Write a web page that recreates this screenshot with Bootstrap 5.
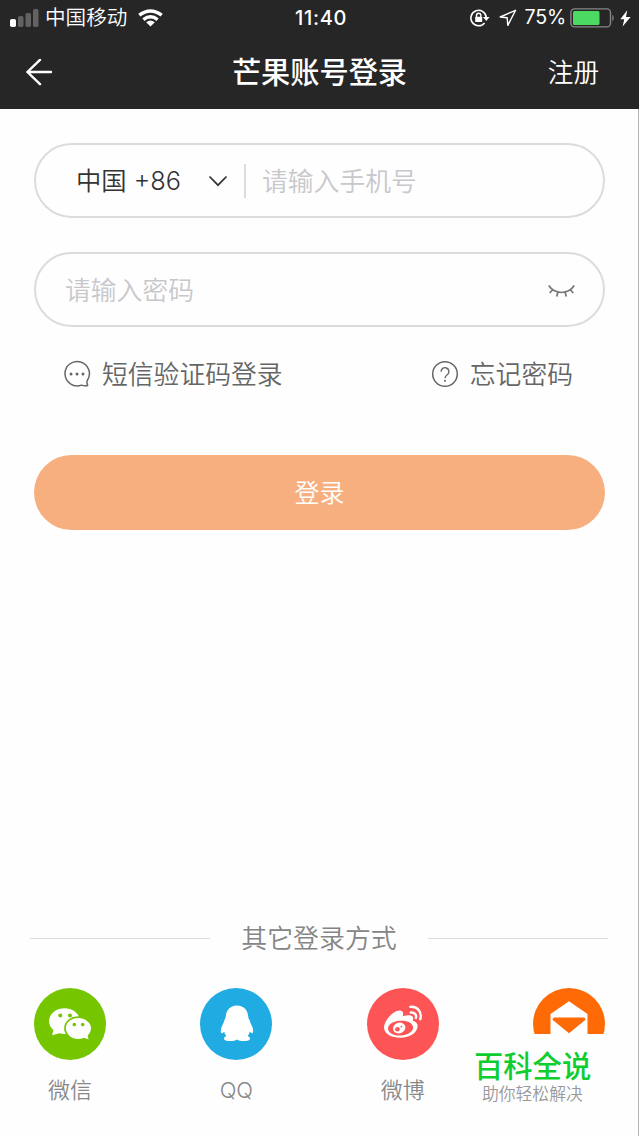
<!DOCTYPE html>
<html lang="zh-CN">
<head>
<meta charset="utf-8">
<meta name="viewport" content="width=device-width, initial-scale=1">
<title>芒果账号登录</title>
<link rel="stylesheet" href="https://cdn.jsdelivr.net/npm/bootstrap@5.3.0/dist/css/bootstrap.min.css">
<style>
body{font-family:Inter,"Noto Sans CJK SC",sans-serif;font-size:26px;line-height:1;color:#333;background:#fefefe}
svg{display:block;flex:none}
.screen{height:1136px;overflow:hidden}
.topbar{background:#262626;color:#fff;height:109px}
.status{height:36px;font-size:20px;padding:0 8px 0 10px;display:grid;grid-template-columns:1fr auto 1fr}
.carrier{font-size:20.6px;margin:0 11px 0 6px;font-weight:350;padding-top:1px}
.clock{font-weight:500;letter-spacing:.7px;padding-left:1px}
.battery-level{font-size:19.6px;letter-spacing:-.2px}
.titlebar{height:73px;padding:0 40px 0 25px;display:grid;grid-template-columns:1fr auto 1fr}
.titlebar h1{font-size:29.2px;line-height:1;font-weight:500;padding-left:15px}
.page-body{border-right:1px solid #b4b4b4;padding:34px 33px 0 34px}
.field{height:75px;border:2px solid #dcdcdc;border-radius:38px}
.field input{border:0;outline:0;background:none;font-size:25.8px;font-weight:350;min-width:0;padding:2px 0 0;height:60px;color:#333}
.field input::placeholder{color:#c8c8cc;opacity:1}
.country{width:210px;flex:none;height:34px;border-right:2px solid #dcdcdc;padding:1px 16px 0 40px;font-size:25.3px;font-weight:350}
.password-field{margin-top:34px;padding:0 27px 0 29px}
.links{color:#666;font-size:25.8px;font-weight:350;margin-top:32px;padding:0 32px 0 29px;height:30px}
.links span{margin-left:11px;padding-top:2px}
.login-btn{height:75px;border:0;border-radius:38px;background:#f8af7f;color:#fff;font-size:25px;font-weight:350;margin-top:66px;padding-top:3px}
.others{color:#858585;font-weight:350;font-size:25.9px;margin:393px -3px 0 -4px;height:30px;gap:31px}
.others span{padding-top:2px}
.others i{height:1px;background:#dcdcdc;flex:1}
.social{margin-top:35px;color:#888;font-size:22px;font-weight:350}
.social span{margin-top:18px;line-height:24px}
.social .latin{font-weight:300}
.disc{width:72px;height:72px}
.watermark{position:absolute;left:464px;top:1034px;width:150px;height:86px;background:#fefefe;padding:16px 7px 0 10px;color:#999;font-size:16.8px;white-space:nowrap}
.watermark strong{color:#0dce2e;font-size:29.3px;font-weight:500;line-height:33px}
.watermark span{margin:3px 0 0 8px;font-weight:350}
</style>
</head>
<body>
<div class="screen position-relative d-flex flex-column">
<header class="topbar">
  <div class="status align-items-center">
    <div class="d-flex align-items-center">
      <svg width="29" height="18" viewBox="0 0 29 18"><rect x="0" y="10" width="6" height="8" rx="1.8" fill="#fff"/><g fill="#626262"><rect x="8" y="7" width="5.5" height="11" rx="1.8"/><rect x="15.5" y="4" width="5.5" height="14" rx="1.8"/><rect x="23" y="0" width="5.5" height="18" rx="1.8"/></g></svg>
      <span class="carrier">中国移动</span>
      <svg width="25" height="18" viewBox="0 0 25 18" fill="none" stroke="#fff" stroke-width="3.4"><path d="M1.3 6.2Q12.5-2.3 23.7 6.2"/><path d="M5.4 10.6Q12.5 5 19.6 10.6"/><path fill="#fff" stroke="none" d="M8.2 13.2Q12.5 9.8 16.8 13.2L12.5 17.5Z"/></svg>
    </div>
    <div class="clock">11:40</div>
    <div class="d-flex align-items-center justify-content-end">
      <svg width="20" height="18" viewBox="0 0 20 18" fill="none" stroke="#fff" stroke-width="1.6"><path d="M14.6 13.9A7.7 7.7 0 1 1 16.3 8.4"/><path fill="#fff" stroke="none" d="M13 8h6.6l-3.3 4z"/><rect x="5.2" y="7.8" width="7" height="5.3" rx=".7" fill="#fff" stroke="none"/><path d="M6.5 8V6.5a2.2 2.2 0 0 1 4.4 0V8" stroke-width="1.4"/></svg>
      <svg width="19" height="18" viewBox="0 0 19 18" class="ms-2 me-2" fill="none" stroke="#fff" stroke-width="1.4" stroke-linejoin="round"><path d="M17.6 1.3 2.2 8l7 .7.6 7.7z"/></svg>
      <span class="battery-level me-1">75%</span>
      <svg width="45" height="20" viewBox="0 0 45 20"><rect x=".9" y=".9" width="39.6" height="18" rx="3.7" fill="none" stroke="#858585" stroke-width="1.4"/><rect x="3" y="3" width="26.5" height="14" rx="1.5" fill="#4cd963"/><path d="M42.3 6.5q3 3.3 0 7z" fill="#858585"/></svg>
      <svg width="11" height="17" viewBox="0 0 11 17" style="margin-left:5px"><path d="M7.2.3.3 9.2h4L2.6 16.5 10.6 7H6z" fill="#fff"/></svg>
    </div>
  </div>
  <div class="titlebar align-items-center">
    <svg width="28" height="28" viewBox="0 0 28 28" fill="none" stroke="#fff" stroke-width="2.4" stroke-linecap="round" stroke-linejoin="round"><path d="M15 .8 2.4 13 15 25.2M2.4 13H26"/></svg>
    <h1 class="m-0">芒果账号登录</h1>
    <span class="text-end" style="font-weight:350;font-size:25.6px;padding-top:1px">注册</span>
  </div>
</header>
<main class="page-body flex-grow-1">
  <div class="field d-flex align-items-center">
    <div class="country d-flex align-items-center"><span class="text-nowrap">中国 +86</span>
      <svg class="ms-auto" width="20" height="12" viewBox="0 0 20 12" fill="none" stroke="#333" stroke-width="1.7"><path d="m1.5 1.5 8.5 8.7 8.5-8.7"/></svg></div>
    <input class="flex-grow-1 ms-3" type="tel" placeholder="请输入手机号" aria-label="手机号">
  </div>
  <div class="field password-field d-flex align-items-center">
    <input class="flex-grow-1" type="password" placeholder="请输入密码" aria-label="密码">
    <svg width="28" height="14" viewBox="0 0 28 14" fill="none" stroke="#777" stroke-width="1.7"><path d="M.8 2.5Q5 9.2 13.5 9.5 22 9.2 26.2 2.5M4.7 6.7 1.7 10M9.9 9.2 8.7 13.4M17.1 9.2l1.2 4.2M22.3 6.7l3 3.3"/></svg>
  </div>
  <div class="links d-flex align-items-center">
    <svg width="28" height="28" viewBox="0 0 28 28" fill="none" stroke="#666" stroke-width="1.5"><path d="M18.4 25.1A12.2 12.2 0 1 1 24.3 20.5Q23.4 22.5 24.7 25.4 21.5 26.2 18.4 25.1Z" stroke-linejoin="round"/><g fill="#666" stroke="none"><circle cx="8" cy="14" r="1.5"/><circle cx="14" cy="14" r="1.5"/><circle cx="20" cy="14" r="1.5"/></g></svg>
    <span>短信验证码登录</span>
    <svg class="ms-auto" width="28" height="28" viewBox="0 0 28 28" fill="none" stroke="#666" stroke-width="1.5"><circle cx="14" cy="14" r="12.3"/><path d="M10.1 11.8a3.9 3.9 0 1 1 6.5 2.7Q14 16.3 14 18.2" stroke-width="1.4"/><circle cx="14" cy="20.8" r="1" fill="#666" stroke="none"/></svg>
    <span>忘记密码</span>
  </div>
  <button class="login-btn w-100 d-block" type="button">登录</button>
  <div class="others d-flex align-items-center"><i></i><span>其它登录方式</span><i></i></div>
  <div class="social d-flex justify-content-between">
    <div class="d-flex flex-column align-items-center disc">
      <svg width="72" height="72" viewBox="0 0 72 72"><circle cx="36" cy="36" r="36" fill="#75c600"/><path fill="#fff" d="M30.5 20.3c8.6 0 15.5 5.7 15.5 12.9S39 46 30.5 46q-2.7 0-5.2-.8L18 47.3l1.5-5.3C16.9 40 15 36.7 15 33.2c0-7.2 6.9-12.9 15.5-12.9"/><path fill="#fff" stroke="#75c600" stroke-width="1.7" d="M44.2 29.2C51.5 29.2 57.9 34.2 57.9 40.3q0 4.5-3.4 7.8l1.3 4.6-5.9-2q-2.7 1.2-5.7 1.2C36.9 51.9 31 46.5 31 40.3s5.9-11.1 13.2-11.1"/><g fill="#75c600"><circle cx="26.3" cy="27.4" r="2"/><circle cx="36" cy="27.4" r="2"/><circle cx="40.3" cy="36.6" r="1.8"/><circle cx="48.7" cy="36.6" r="1.8"/></g></svg>
      <span>微信</span></div>
    <div class="d-flex flex-column align-items-center disc">
      <svg width="72" height="72" viewBox="0 0 72 72"><circle cx="36" cy="36" r="36" fill="#20abe2"/><path fill="#fff" d="M37 17.5C30 17.5 26 22.5 25.7 29c-.1 1.7-1.3 2.6-1.7 4.2-.3 1.7-1.8 4-2.6 6.4-.9 2.7-.6 5.4.3 5.6.8.2 1.7-.7 2.5-1.8.4 1.9 1 3.2 2.2 4.6-1.4.6-2.4 1.3-2.4 2.4 0 3.6 10.4 3.2 13 1 2.6 2.2 13 2.6 13-1 0-1.1-1-1.8-2.4-2.4 1.2-1.4 1.8-2.7 2.2-4.6.8 1.1 1.7 2 2.5 1.8.9-.2 1.2-2.9.3-5.6-.8-2.4-2.3-4.7-2.6-6.4-.4-1.6-1.6-2.5-1.7-4.2C48 22.5 44 17.5 37 17.5"/></svg>
      <span class="latin">QQ</span></div>
    <div class="d-flex flex-column align-items-center disc">
      <svg width="72" height="72" viewBox="0 0 72 72"><circle cx="36" cy="36" r="36" fill="#fd5455"/><path fill="#fff" d="M33 22.4c2.8.2 3.8 2.4 2.7 5.8 4-1.2 8.8-1.7 10.2.8.6 1.2.3 2.5-.2 3.7 3.4 1 5.2 2.8 4.9 5.9-.7 6.5-7.6 11.2-17.1 11.2-9.1 0-16.5-4-16.5-10.3C17 32.5 26.5 22 33 22.4"/><path fill="#fd5455" d="M32.7 32.8c7.3-.7 13.1 2.2 13.4 6.4.3 4.1-5 7.8-11.9 8.3-7.1.4-12.7-2.4-13.1-6.6-.3-4.1 4.3-7.5 11.6-8.1"/><ellipse cx="32.2" cy="40" rx="6.3" ry="5.4" transform="rotate(-20 32.2 40)" fill="#fff"/><circle cx="30.5" cy="41.3" r="2.3" fill="#fd5455"/><circle cx="34.4" cy="38.6" r=".9" fill="#fd5455"/><path d="M43.3 18.9c7-1 12 5.3 10 12.3M43.8 24.5c3.6-.4 6 2.4 5.1 5.4" fill="none" stroke="#fff" stroke-width="2.4" stroke-linecap="round"/></svg>
      <span>微博</span></div>
    <div class="disc">
      <svg width="72" height="72" viewBox="0 0 72 72"><circle cx="36" cy="36" r="36" fill="#fe6a05"/><path fill="#fff" d="M17.5 26 36 13.3 54.5 26V54h-37z"/><path fill="#fe6a05" d="M21.5 29.5h29q2 0 2 2.2L36 45.2 19.5 31.7q0-2.2 2-2.2"/></svg></div>
  </div>
</main>
<aside class="watermark d-flex flex-column"><strong>百科全说</strong><span>助你轻松解决</span></aside>
</div>
<script src="https://cdn.jsdelivr.net/npm/bootstrap@5.3.0/dist/js/bootstrap.bundle.min.js"></script>
</body>
</html>
